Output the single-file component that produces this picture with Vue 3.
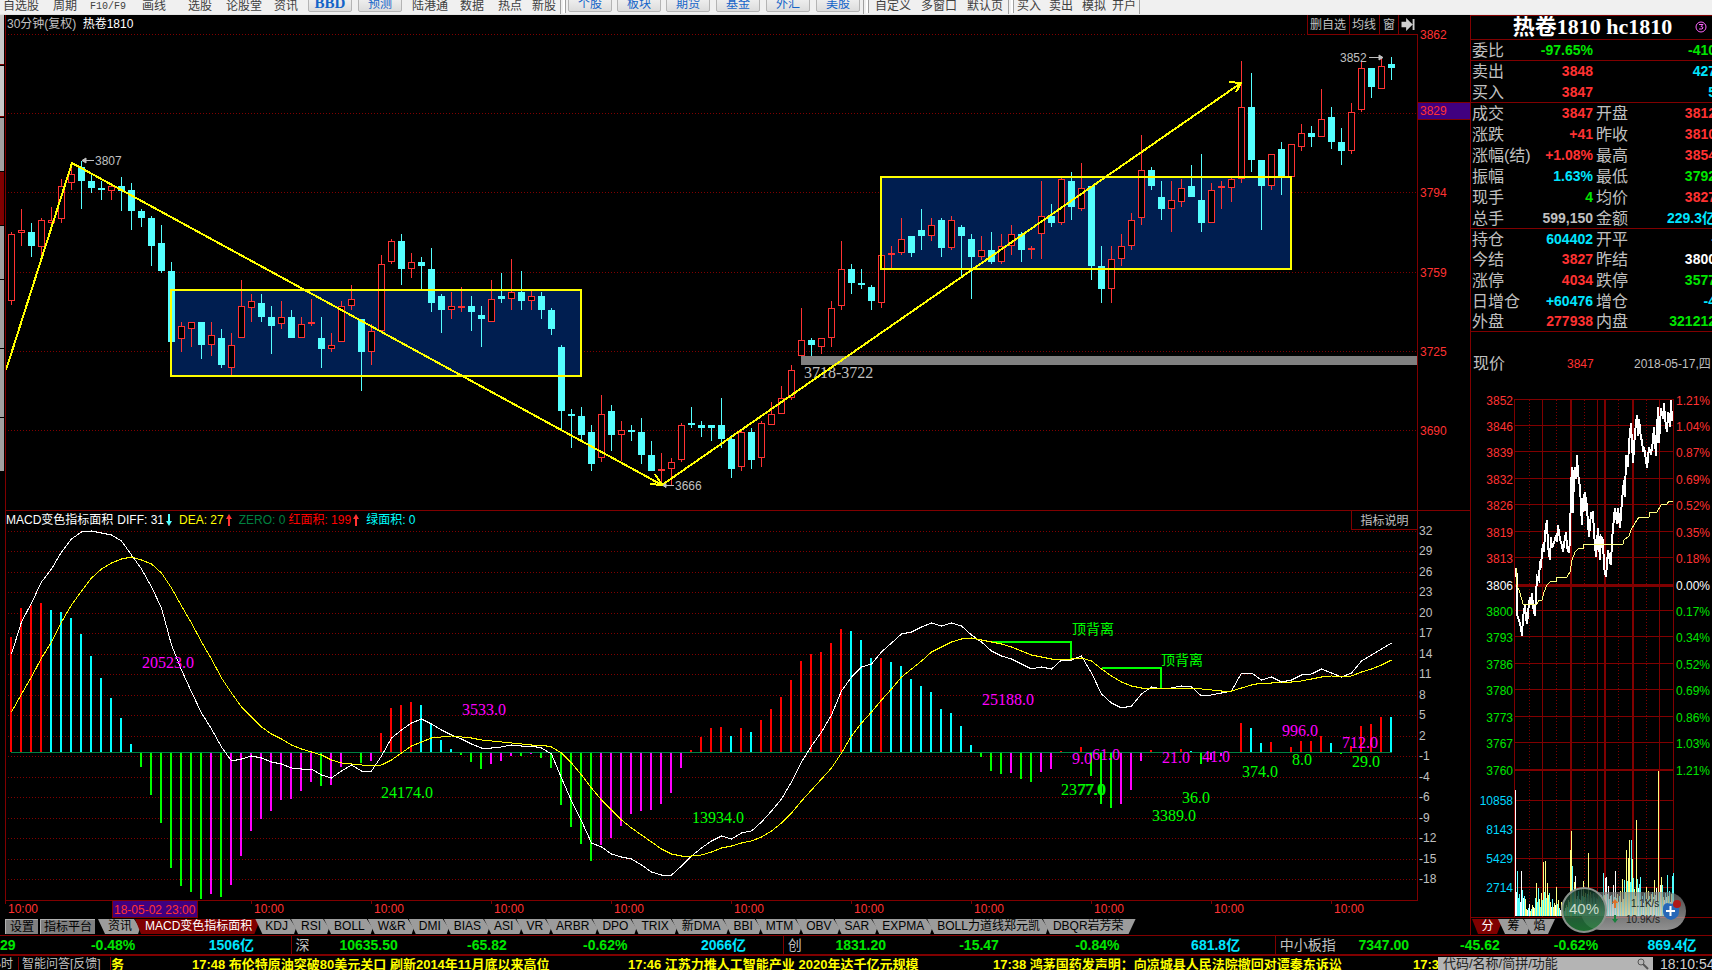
<script setup>
const toolbar = [
  { t: '自选股', w: 50 }, { t: '周期', w: 37 }, { t: 'F10/F9', w: 52, mono: true }, { t: '画线', w: 46 },
  { t: '选股', w: 38 }, { t: '论股堂', w: 48 }, { t: '资讯', w: 35 },
  { t: 'BBD', w: 50, btn: true, bold: true }, { t: '预测', w: 53, btn: true },
  { t: '陆港通', w: 48 }, { t: '数据', w: 38 }, { t: '热点', w: 34 }, { t: '新股', w: 28 }, { sep: true, w: 9 },
  { t: '个股', w: 49, btn: true }, { t: '板块', w: 49, btn: true }, { t: '期货', w: 50, btn: true },
  { t: '基金', w: 50, btn: true }, { t: '外汇', w: 50, btn: true }, { t: '美股', w: 46, btn: true }, { sep: true, w: 12 },
  { t: '自定义', w: 46 }, { t: '多窗口', w: 46 }, { t: '默认页', w: 41 }, { sep: true, w: 9 },
  { t: '买入', w: 32 }, { t: '卖出', w: 33 }, { t: '模拟', w: 30 }, { t: '开户', w: 27 }
]

const rail = [
  { k: 'light', h: 49 }, { k: 'red', h: 1 }, { k: 'gap', h: 1 }, { k: 'light', h: 50 }, { k: 'red', h: 1 }, { k: 'gap', h: 1 },
  { k: 'grey', h: 53 }, { k: 'gap', h: 1 }, { k: 'red', h: 53 }, { k: 'gap', h: 1 }, { k: 'grey', h: 53 }, { k: 'gap', h: 1 },
  { k: 'grey', h: 68 }, { k: 'gap', h: 1 }, { k: 'grey', h: 68 }, { k: 'gap', h: 1 }, { k: 'grey', h: 53 }
]

// direction, high, body top, body bottom, low
const candleText = `
r 232 234 300 305|r 209 230 232 246|c 223 232 246 257|r 218 220 246 256|r 207 220 222 225|r 179 186 218 223
r 168 174 182 190|c 161 167 181 209|c 173 181 188 193|c 181 188 190 200|r 185 186 190 200|c 177 186 191 211
c 183 190 211 230|c 209 211 218 227|c 216 218 246 266|c 225 243 271 273|c 262 271 342 342|r 322 326 338 352
r 322 322 328 347|c 322 322 345 359|r 322 335 344 356|c 329 338 365 368|r 333 345 367 375|r 280 306 337 338
r 294 301 307 322|c 294 303 317 322|c 306 317 326 354|r 301 317 323 329|c 310 317 338 338|r 317 324 337 338
r 299 322 323 326|c 317 338 349 368|r 333 345 348 352|r 301 306 341 341|r 285 299 305 310|c 319 319 352 391
r 324 331 351 365|r 255 264 330 330|r 239 241 261 264|c 234 241 269 285|r 253 262 268 278|c 257 262 266 290
c 248 269 303 312|c 294 296 310 333|r 292 306 309 319|r 287 306 307 312|c 296 306 312 331|c 306 315 319 347
r 280 299 321 321|c 273 296 299 303|r 259 292 298 310|c 271 292 301 310|r 291 296 300 310|c 292 296 310 319
c 308 310 329 335|c 345 347 411 430|c 409 414 416 448|c 407 416 435 440|c 425 432 464 471|r 395 414 457 462
c 405 411 435 451|r 421 430 434 461|c 425 430 432 441|c 418 432 455 464|c 441 455 471 471|r 453 469 470 485
r 458 462 468 485|r 423 425 459 462|c 407 423 425 428|c 421 425 428 437|c 425 425 428 441|c 398 425 439 448
c 435 439 469 478|r 430 432 466 471|c 428 432 460 469|r 421 423 457 467|r 402 414 424 424|r 386 398 413 413
r 365 370 397 400|r 308 340 355 355|c 338 340 345 356|r 338 338 346 354|r 301 308 337 347|r 241 269 305 310
c 264 269 283 294|c 269 283 285 289|c 285 287 301 310|r 255 255 302 308|r 246 253 254 269|r 218 239 252 255
c 236 236 253 257|c 209 230 236 250|r 218 225 235 241|c 218 220 248 257|r 216 220 247 250|c 225 227 236 277
c 234 239 257 299|r 236 250 256 260|c 232 250 262 264|r 234 246 261 264|r 225 234 245 255|c 232 234 250 262
r 246 248 249 259|r 181 216 233 259|c 204 216 223 227|r 177 179 222 225|c 172 181 207 220|r 163 188 208 211
c 186 186 266 280|c 246 266 289 303|r 246 259 288 303|r 234 246 258 266|r 213 220 245 250|r 135 170 217 225
c 167 170 186 190|c 181 197 209 220|r 181 200 208 232|r 179 188 201 207|c 165 186 197 197|c 154 200 223 232
r 183 190 222 222|r 181 186 187 209|r 177 179 187 202|r 61 107 178 183|c 73 107 160 172|c 160 160 186 230
r 154 154 185 190|c 142 149 177 195|r 144 144 176 176|r 124 133 146 151|c 126 133 137 147|r 89 119 136 136
c 107 117 142 149|c 128 142 151 165|r 103 112 150 154|r 61 68 109 112|c 68 68 87 98|r 58 66 88 88|c 57 64 68 80`
const candles = candleText.trim().split(/[|\n]/).map((row, i) => {
  const [kind, ...n] = row.trim().split(' ')
  const [high, top, bottom, low] = n.map(Number)
  return { x: 11 + 10 * i, kind, high, top, bottom, low }
})

// bar colour and the y its free end reaches
const barText = `
r637 r608 r605 r603 c610 c612 c618 c634 c656 c678 c698 c718 c744 g767 g795 g823 g868 g886 g892 g899 m894 g897 m885 m856
m831 m819 m811 m800 m799 m791 m782 g786 m785 m767 m753 g763 m761 r733 r708 r705 r702 c705 c724 c740 c749 g755 g762 g769
m764 m761 m756 g756 m754 g758 g768 g805 g827 g844 g861 m845 m838 m826 m814 m811 m810 m804 m793 m768 r750 r737 r728 r727
c736 r728 c732 r720 r709 r697 r680 r661 r654 r652 r643 r629 c631 c640 c658 r658 c662 c666 c679 c686 c692 c709 c713 c726
c745 g757 g771 g774 m773 g779 g782 m772 m769 r751 r752 r747 g776 g804 g808 m804 m790 m761 r750 r752 r752 r749 c751 g764
m760 m756 r752 r723 c728 c743 r742 r752 r747 r741 r741 r736 c743 g754 r746 r726 r724 r717 c717`
const bars = barText.trim().split(/\s+/).map((s, i) => {
  const y = Number(s.slice(1))
  return { x: 10 + 10 * i, kind: s[0], y: Math.min(y, 752), h: Math.abs(y - 752) }
})

const series = (text) => text.trim().split(/\s+/).map((v, i) => `${11.5 + 10 * i},${v}`).join(' ')
const diff = series(`654 622 603 582 569 552 539 532 531 533 535 541 555 569 587 608 645 670 692 713 729 747 761 759 756 758
  762 764 768 769 769 775 778 771 765 771 771 756 738 730 723 719 724 730 735 739 744 748 748 747 745 746 746 748 754 778
  801 821 843 847 854 857 859 865 872 875 875 866 856 848 841 836 839 833 831 822 811 799 782 762 746 732 715 691 677 667
  664 652 643 634 632 627 623 626 623 626 635 642 651 656 659 664 669 667 669 660 660 656 673 694 703 708 706 694 687 689
  688 686 687 696 695 693 691 673 673 680 677 682 680 675 674 669 673 677 673 661 655 649 643`)
const dea = series(`712 694 677 658 642 622 605 591 578 569 563 559 557 560 564 573 588 606 623 642 659 678 693 707 717 727
  734 739 745 749 752 755 760 763 764 765 766 765 760 753 746 742 738 737 736 737 738 740 741 742 743 744 745 745 747 753
  763 775 788 800 810 820 828 835 842 849 854 856 856 855 852 848 846 843 841 837 831 823 813 801 790 779 768 753 736 723
  712 700 689 677 669 661 652 647 642 639 638 640 642 644 647 651 655 657 659 659 659 658 661 669 676 682 686 688 688 688
  688 688 688 689 690 691 691 688 685 683 683 682 682 681 679 677 676 677 676 672 669 665 660`)

const priceAxis = [[3862, 34], [3829, 113, 110], [3794, 192], [3759, 272], [3725, 351], [3690, 430]]
const macdAxis = [[32, 531], [29, 551], [26, 572], [23, 592], [20, 613], [17, 633], [14, 654], [11, 674], [8, 695], [5, 715],
  [2, 736], [-1, 756], [-4, 777], [-6, 797], [-9, 818], [-12, 838], [-15, 859], [-18, 879]]
const times = [8, 254, 374, 494, 614, 734, 854, 974, 1094, 1214, 1334]

const areaLabels = [
  ['m', '20523.0', 142, 663], ['m', '3533.0', 462, 710], ['g', '24174.0', 381, 793], ['g', '13934.0', 692, 818],
  ['m', '25188.0', 982, 700], ['m', '9.0', 1072, 759], ['m', '61.0', 1092, 755], ['g', '2377.0', 1061, 790],
  ['g', '77.0', 1078, 790], ['m', '21.0', 1162, 758], ['m', '41.0', 1202, 757], ['m', '996.0', 1282, 731],
  ['m', '712.0', 1342, 743], ['g', '374.0', 1242, 772], ['g', '8.0', 1292, 760], ['g', '29.0', 1352, 762],
  ['g', '36.0', 1182, 798], ['g', '3389.0', 1152, 816]
]

const quotes = [
  ['委比', '-97.65%', 'g', '', '-410', 'g', 'line'],
  ['卖出', '3848', 'r', '', '427', 'c', ''],
  ['买入', '3847', 'r', '', '5', 'c', 'line'],
  ['成交', '3847', 'r', '开盘', '3812', 'r', ''],
  ['涨跌', '+41', 'r', '昨收', '3810', 'r', ''],
  ['涨幅(结)', '+1.08%', 'r', '最高', '3854', 'r', ''],
  ['振幅', '1.63%', 'c', '最低', '3792', 'g', ''],
  ['现手', '4', 'g', '均价', '3827', 'r', ''],
  ['总手', '599,150', 's', '金额', '229.3亿', 'c', 'line'],
  ['持仓', '604402', 'c', '开平', '-', 'c', 'short'],
  ['今结', '3827', 'r', '昨结', '3800', 'w', ''],
  ['涨停', '4034', 'r', '跌停', '3577', 'g', ''],
  ['日增仓', '+60476', 'c', '增仓', '-4', 'c', ''],
  ['外盘', '277938', 'r', '内盘', '321212', 'g', 'line short']
]

const miniRows = [[3852, '1.21%', 400], [3846, '1.04%', 426], [3839, '0.87%', 452], [3832, '0.69%', 479], [3826, '0.52%', 505],
  [3819, '0.35%', 532], [3813, '0.18%', 558], [3806, '0.00%', 585], [3800, '0.17%', 611], [3793, '0.34%', 637], [3786, '0.52%', 664],
  [3780, '0.69%', 690], [3773, '0.86%', 717], [3767, '1.03%', 743], [3760, '1.21%', 770]]
const volRows = [[10858, 800], [8143, 829], [5429, 858], [2714, 887]]
const rowTone = (i) => (i < 7 ? 'r' : i === 7 ? 'w' : 'g')
const miniCols = [[1514, 1], [1542, 1], [1570, 2], [1597, 1], [1604, 2], [1632, 2], [1659, 1], [1673, 1]]
const miniDots = [1529, 1556, 1584, 1618, 1646]
const miniPrice = `1516,568 1516,577 1517,573 1517,615 1519,620 1521,628 1522,636 1523,617 1525,605 1526,618 1527,624 1529,603
1530,597 1531,605 1532,593 1533,607 1535,616 1536,595 1537,577 1539,580 1540,561 1541,568 1542,550 1544,542 1544,552 1545,533
1547,520 1548,547 1550,560 1551,537 1552,548 1554,543 1556,535 1557,542 1558,525 1560,540 1562,545 1563,552 1565,538 1566,532
1567,547 1569,553 1570,540 1571,487 1572,467 1573,513 1574,473 1575,467 1576,479 1577,455 1578,473 1580,487 1581,507 1582,525
1583,500 1585,492 1585,511 1586,497 1588,522 1589,537 1591,513 1593,512 1594,533 1596,557 1598,528 1600,560 1601,537 1603,540
1604,567 1606,577 1608,550 1610,562 1611,565 1612,540 1614,517 1615,508 1617,524 1618,508 1620,528 1622,500 1624,480 1625,497
1626,455 1628,467 1629,443 1631,423 1633,463 1635,433 1637,415 1638,436 1639,419 1641,439 1642,440 1643,452 1644,447 1646,460
1647,468 1649,447 1651,455 1653,440 1654,427 1656,456 1658,407 1659,443 1661,408 1663,419 1664,403 1665,418 1667,432 1668,412
1670,427 1671,400 1672,420 1673,420`
const miniAverage = `1516,568 1517,585 1520,593 1523,604 1537,604 1539,600 1542,600 1544,592 1547,585 1551,581 1556,581 1556,577
1567,577 1570,572 1572,560 1575,552 1579,548 1583,548 1583,544 1623,544 1624,540 1629,536 1631,530 1635,523 1639,517 1649,517
1650,512 1657,512 1661,505 1667,504 1669,501 1673,501`
const volText = `
w126 w24 c45 c18 c22 w14 w45 c26 w18 c20 y17 y7 w6 c8 w12 y5 c7 y11 w9 y8 c18 y33 c14 c28 y17 c9 y23 c16 y54 c24 y55 c18 y33
y21 c23 y14 w9 c17 y9 y13 w11 y29 c12 y16 c8 w6 y14 c7 y13 c5 w8 y11 c9 y16 c14 y66 y85 c50 c24 y34 w40 c17 w20 c25 w17 y16
w27 c20 y35 c19 y23 w12 c22 y63 c14 y24 c18 y12 c23 c19 y12 c18 w17 y22 c20 y18 c21 y14 c43 y21 w38 w39 c22 w30 c17 w20 c21
w12 w31 c19 w45 c18 y22 w14 c20 y25 c14 y37 y17 c36 y24 y66 c35 y58 y76 c34 c76 y57 c38 y27 y20 y96 c37 w28 c32 c39 y17 c20
w13 c23 y15 y29 c17 y25 c20 w14 y22 c24 w19 y36 c21 w28 c15 y145 c24 w31 y39 c31 y19 w16 c23 w19 c41 y20 c25 w14 y22 c40 c43`
const vols = volText.trim().split(/\s+/).map((s, i) => ({ x: 1515 + i, kind: s[0], h: Number(s.slice(1)) })).filter((v) => v.x < 1674)

const tabs = ['KDJ', 'RSI', 'BOLL', 'W&R', 'DMI', 'BIAS', 'ASI', 'VR', 'ARBR', 'DPO', 'TRIX', '新DMA', 'BBI', 'MTM', 'OBV', 'SAR',
  'EXPMA', 'BOLL力道线郑元凯', 'DBQR岩芳荣']

const indices = [
  { name: '深', cells: ['10635.50', '-65.82', '-0.62%'], amount: '2066亿' },
  { name: '创', cells: ['1831.20', '-15.47', '-0.84%'], amount: '681.8亿' },
  { name: '中小板指', cells: ['7347.00', '-45.62', '-0.62%'], amount: '869.4亿', last: true }
]
</script>

<template>
  <div class="app">
    <nav class="toolbar">
      <template v-for="(b, i) in toolbar" :key="i">
        <span v-if="b.sep" class="tool-sep" :style="{ width: b.w + 'px' }"></span>
        <span v-else class="tool-slot" :style="{ width: b.w + 'px' }">
          <button type="button" :class="{ raised: b.btn, mono: b.mono, bbd: b.bold }">{{ b.t }}</button>
        </span>
      </template>
      <span class="tool-end"></span>
    </nav>

    <main class="desk">
      <aside class="rail">
        <i v-for="(s, i) in rail" :key="i" :class="s.k" :style="{ height: s.h + 'px' }"></i>
      </aside>

      <section class="charts">
        <div class="panel">
          <svg viewBox="5 15 1465 495">
            <g class="crisp">
              <line v-for="a in priceAxis" :key="a[0]" class="grid" x1="8" x2="1417" :y1="a[1] + 0.5" :y2="a[1] + 0.5" />
              <rect class="zone" x="171" y="290" width="410" height="86" />
              <rect class="zone" x="881" y="177" width="410" height="92" />
              <g v-for="c in candles" :key="c.x" :class="'k-' + c.kind">
                <template v-if="c.kind === 'r'">
                  <rect class="wick" :x="c.x" :y="c.high" width="1" :height="c.low - c.high" />
                  <rect class="body" :x="c.x - 2.5" :y="c.top + 0.5" width="6" :height="Math.max(c.bottom - c.top, 1)" />
                </template>
                <template v-else>
                  <rect class="wick" :x="c.x" :y="c.high" width="1" :height="c.low - c.high" />
                  <rect class="wick" :x="c.x - 3" :y="c.top" width="7" :height="Math.max(c.bottom - c.top, 1)" />
                </template>
              </g>
              <rect x="801" y="356" width="616" height="9" fill="#808080" />
              <rect class="frame" x="171" y="290" width="410" height="86" />
              <rect class="frame" x="881" y="177" width="410" height="92" />
            </g>
            <text class="song grey" x="804" y="378">3718-3722</text>
            <g class="crisp">
              <polyline class="trend" points="6,370 72,163 662,485 1241,83" />
              <polyline class="trend" points="650,484 662,485 655,474" />
              <polyline class="trend" points="1229,82 1241,83 1236,92" />
            </g>
            <g class="mark">
              <path d="M83 160.5H94M82 160.5l4-2.5v5zM1369 57.5H1381M1383 57.5l-4-2.5v5zM665 485.5H674M663 485.5l3-2v4z" />
            </g>
            <text class="grey" x="95" y="165">3807</text>
            <text class="grey" x="1340" y="62">3852</text>
            <text class="grey" x="675" y="490">3666</text>
            <g class="crisp">
              <rect class="rule" x="5" y="15" width="1" height="495" />
              <rect class="rule" x="1417" y="15" width="1" height="495" />
              <rect class="cursor" x="1417.5" y="102.5" width="53" height="17" />
            </g>
            <text v-for="a in priceAxis" :key="a[0]" class="red" x="1420" :y="(a[2] || a[1]) + 5">{{ a[0] }}</text>
          </svg>
          <h1 class="chart-title"><span>30分钟(复权)</span> 热卷1810</h1>
          <div class="chart-tools">
            <button type="button">删自选</button>
            <button type="button">均线</button>
            <button type="button">窗</button>
            <button type="button" aria-label="最新">
              <svg class="skip" viewBox="0 0 14 14"><path d="M0 4h5V0l7 7-7 7v-4H0zM12 1h2v12h-2z" /></svg>
            </button>
          </div>
        </div>

        <div class="panel">
          <svg viewBox="5 510 1465 408">
            <g class="crisp">
              <rect class="rule" x="5" y="510" width="1465" height="1" />
              <line v-for="a in macdAxis" :key="a[0]" class="grid" x1="8" x2="1417" :y1="a[1] + 0.5" :y2="a[1] + 0.5" />
              <rect v-for="b in bars" :key="b.x" :class="'b-' + b.kind" :x="b.x" :y="b.y" width="2" :height="b.h" />
              <rect x="11" y="752" width="1381" height="1" fill="#008040" />
              <polyline class="curve" stroke="#fff" :points="diff" />
              <path class="signal" d="M992 642H1071V659M1102 668H1161V688" />
              <polyline class="curve" stroke="#ff0" :points="dea" />
              <rect class="rule" x="5" y="510" width="1" height="391" />
              <rect class="rule" x="1417" y="510" width="1" height="391" />
              <rect class="rule" x="5" y="900" width="1413" height="1" />
              <rect v-for="t in times" :key="t" class="rule" :x="t - 3" y="901" width="1" height="3" />
              <rect class="cursor" x="112.5" y="900.5" width="85" height="17" />
            </g>
            <text v-for="(l, i) in areaLabels" :key="i" class="song" :class="'t-' + l[0]" :x="l[2]" :y="l[3] + 5">{{ l[1] }}</text>
            <text class="warn" x="1072" y="634">顶背离</text>
            <text class="warn" x="1161" y="665">顶背离</text>
            <text v-for="a in macdAxis" :key="a[0]" class="grey" x="1419" :y="a[1] + 4">{{ a[0] }}</text>
            <text v-for="t in times" :key="t" class="red" :x="t" y="913">10:00</text>
            <text class="red" x="114" y="914">18-05-02 23:00</text>
          </svg>
          <p class="macd-title">
            <span class="w">MACD变色指标面积</span>
            <span class="w">DIFF: 31<svg class="arrow" viewBox="0 0 6 12"><path fill="#54ffff" d="M2 0h2v7h2l-3 5-3-5h2z" /></svg></span>
            <span class="y">DEA: 27<svg class="arrow" viewBox="0 0 6 12"><path fill="#ff3232" d="M2 12h2V5h2L3 0 0 5h2z" /></svg></span>
            <span class="z">ZERO: 0</span>
            <span class="rr">红面积: 199<svg class="arrow" viewBox="0 0 6 12"><path fill="#ff3232" d="M2 12h2V5h2L3 0 0 5h2z" /></svg></span>
            <span class="cc">绿面积: 0</span>
          </p>
          <button type="button" class="explain">指标说明</button>
        </div>

        <nav class="tabs">
          <button type="button" class="flat">设置</button>
          <button type="button" class="flat wide">指标平台</button>
          <button type="button" class="tab news">资讯</button>
          <button type="button" class="tab active">MACD变色指标面积</button>
          <button v-for="t in tabs" :key="t" type="button" class="tab">{{ t }}</button>
        </nav>
      </section>

      <aside class="quote">
        <h2>热卷1810 hc1810
          <svg class="badge" viewBox="0 0 12 12"><circle cx="6" cy="6" r="5" fill="none" stroke="#f6f" /><path d="M4 3.5h4L6 5.5q2 0 2 1.5T4 8" fill="none" stroke="#f6f" /></svg>
        </h2>
        <table>
          <colgroup><col class="c1" /><col class="c2" /><col class="c3" /><col class="c4" /></colgroup>
          <tbody>
            <tr v-for="q in quotes" :key="q[0]" :class="q[6]">
              <th scope="row">{{ q[0] }}</th>
              <td :class="'q-' + q[2]">{{ q[1] }}</td>
              <th>{{ q[3] }}</th>
              <td :class="'q-' + q[5]">{{ q[4] }}</td>
            </tr>
          </tbody>
        </table>
        <div class="panel">
          <svg viewBox="1471 332 241 586">
            <text class="name" x="1473" y="369">现价</text>
            <text class="red" x="1567" y="368">3847</text>
            <text class="grey" x="1634" y="368">2018-05-17,四</text>
            <g class="crisp">
              <rect v-for="(m, i) in miniRows" :key="m[0]" class="rule" x="1514" :y="i === 7 ? 584 : m[2] - 1" width="160" :height="i === 7 ? 3 : i === 14 ? 2 : 1" />
              <rect v-for="v in volRows" :key="v[0]" class="rule" x="1514" :y="v[1]" width="160" height="1" />
              <rect v-for="c in miniCols" :key="c[0]" class="rule" :x="c[0]" y="400" :width="c[1]" height="517" />
              <line v-for="d in miniDots" :key="d" class="grid" :x1="d + 0.5" :x2="d + 0.5" y1="400" y2="917" />
              <rect v-for="v in vols" :key="v.x" :class="'v-' + v.kind" :x="v.x" :y="916 - v.h" width="1" :height="v.h" />
              <polyline class="curve bold" stroke="#fff" :points="miniPrice" />
              <polyline class="curve" stroke="#ffff80" :points="miniAverage" />
              <rect class="rule" x="1471" y="917" width="241" height="1" />
            </g>
            <g v-for="(m, i) in miniRows" :key="m[0]" :class="'m-' + rowTone(i)">
              <text text-anchor="end" x="1513" :y="m[2] + 5">{{ m[0] }}</text>
              <text x="1676" :y="m[2] + 5">{{ m[1] }}</text>
            </g>
            <text v-for="v in volRows" :key="v[0]" class="m-c" text-anchor="end" x="1513" :y="v[1] + 5">{{ v[0] }}</text>
          </svg>
          <div class="meter">
            <svg viewBox="0 0 126 48">
              <defs>
                <linearGradient id="pill" x1="0" x2="0" y1="0" y2="1"><stop offset="0" stop-color="#777" /><stop offset="1" stop-color="#ddd" /></linearGradient>
                <linearGradient id="ball" x1="0" x2="0" y1="0" y2="1"><stop offset="0" stop-color="#0c2c20" /><stop offset="0.55" stop-color="#2a6444" /><stop offset="1" stop-color="#218036" /></linearGradient>
              </defs>
              <rect x="20" y="6" width="105" height="38" rx="19" fill="url(#pill)" fill-opacity="0.65" />
              <circle cx="23" cy="24" r="22" fill="url(#ball)" fill-opacity="0.85" stroke="#8a928c" stroke-width="2" />
              <text x="23" y="28" text-anchor="middle" class="pct">40%</text>
              <text x="70" y="21" class="rate">1.1K/s</text>
              <text x="65" y="37" class="rate">10.9K/s</text>
              <path d="M53 22v-5h-2l3-4 3 4h-2v5z" fill="#e07028" />
              <path d="M53 29v4h-2l3 4 3-4h-2v-4z" fill="#18803c" />
              <path d="M118 16v10q0 6-8 8-8-2-8-8v-4q0-4 4-5 6 2 12-1z" fill="#2868b8" />
              <path d="M105 25h9M109.5 20v10" stroke="#fff" stroke-width="2" />
              <circle cx="116" cy="18" r="4" fill="#b01818" />
            </svg>
          </div>
        </div>
        <nav class="tabs side">
          <button type="button" class="tab active">分</button>
          <button type="button" class="tab">筹</button>
          <button type="button" class="tab">焰</button>
        </nav>
      </aside>
    </main>

    <section class="indices">
      <div class="index first">
        <b class="edge">29</b><b>-0.48%</b><b class="amt">1506亿</b>
      </div>
      <div v-for="x in indices" :key="x.name" class="index" :class="{ last: x.last }">
        <span>{{ x.name }}</span>
        <b v-for="c in x.cells" :key="c">{{ c }}</b>
        <b class="amt">{{ x.amount }}</b>
      </div>
    </section>

    <footer class="ticker">
      <span class="cell clip">小时</span>
      <a href="#" class="cell ask">智能问答[反馈]</a>
      <div class="news-line">
        <span class="n0">务</span>
        <span class="n1">17:48 布伦特原油突破80美元关口 刷新2014年11月底以来高位</span>
        <span class="n2">17:46 江苏力推人工智能产业 2020年达千亿元规模</span>
        <span class="n3">17:38 鸿茅国药发声明：向凉城县人民法院撤回对谭秦东诉讼</span>
        <span>17:3</span>
      </div>
      <label class="search">
        <input type="text" aria-label="搜索" placeholder="代码/名称/简拼/功能" />
        <svg viewBox="0 0 12 12"><circle cx="4" cy="4" r="3" fill="none" stroke="#555" /><path d="M6 6l5 5" stroke="#555" stroke-width="2" /></svg>
      </label>
      <time>18:10:54</time>
    </footer>
  </div>
</template>

<style>
html, body { background: #000; }
body { margin: 0; overflow: hidden; }
</style>

<style scoped>
.app { font: 12px/16px "Liberation Sans", "Noto Sans CJK SC", sans-serif; color: #c0c0c0; background: #000; overflow: hidden; min-height: 100vh; }
button { font: inherit; color: inherit; background: none; border: 0; padding: 0; margin: 0; white-space: nowrap; }
svg { display: block; }

.toolbar { display: flex; height: 14px; padding-left: 3px; background: #f0f0f0; border-bottom: 1px solid #e4e4e4; color: #404040; overflow: hidden; }
.tool-slot { flex: none; height: 14px; }
.tool-slot button { display: block; line-height: 13px; }
.tool-slot .mono { font-family: "Liberation Mono", monospace; font-size: 10px; }
.tool-slot .raised { width: 44px; height: 20px; margin-top: -8px; margin-left: -1px; line-height: 22px; color: #1464c8; background: linear-gradient(#f8f8f8, #dcdcdc); border: 1px solid #b4b4b4; border-radius: 2px; box-sizing: border-box; }
.tool-slot .bbd { font: bold 15px/21px "Liberation Serif", serif; }
.tool-sep { flex: none; box-sizing: border-box; height: 14px; border-left: 1px solid #a0a0a0; }
.tool-sep::after { content: ""; display: block; margin-left: 2px; width: 2px; height: 13px; background: #fff; border-right: 1px solid #a0a0a0; }
.tool-end { border-left: 1px solid #a0a0a0; }

.desk { display: grid; grid-template-columns: 5px minmax(0, 1fr) 242px; }
.rail { display: flex; flex-direction: column; }
.rail i { display: block; width: 4px; }
.rail .light { background: #c8c8c8; }
.rail .grey { background: #a0a0a0; }
.rail .red { background: #800000; }

.panel { position: relative; }
.panel > svg { width: 100%; height: auto; }
.crisp { shape-rendering: crispEdges; }
.grid { stroke: #800000; stroke-dasharray: 1 2; }
.rule { fill: #800000; }
.zone { fill: #001e50; }
.frame { fill: none; stroke: #ff0; stroke-width: 2; }
.trend { fill: none; stroke: #ff0; stroke-width: 2; }
.k-r .wick { fill: #ff3232; }
.k-r .body { fill: #000; stroke: #ff3232; }
.k-c .wick { fill: #54ffff; }
.mark path { stroke: #c0c0c0; fill: #c0c0c0; stroke-width: 1; }
.cursor { fill: #400080; stroke: #800000; }
.grey { fill: #c0c0c0; }
.red { fill: #ff3232; }
.song { font-family: "Liberation Serif", serif; font-size: 16px; }
.b-r { fill: #f00; }
.b-c { fill: #0ff; }
.b-g { fill: #0f0; }
.b-m { fill: #f0f; }
.t-g { fill: #0f0; }
.t-m { fill: #f0f; }
.curve { fill: none; stroke-width: 1; }
.curve.bold { stroke-width: 2; }
.signal { fill: none; stroke: #0f0; stroke-width: 2; }
.warn { fill: #0f0; font-size: 14px; }

.chart-title { position: absolute; left: 2px; top: 1px; margin: 0; font-size: 12px; line-height: 16px; font-weight: 400; color: #fff; }
.chart-title span { color: #c0c0c0; margin-right: 3px; }
.chart-tools { position: absolute; top: 0; right: 52px; display: flex; height: 19px; border-bottom: 1px solid #800000; background: #000; }
.chart-tools button { border-left: 1px solid #800000; padding: 0 3px 0 2px; line-height: 18px; box-sizing: border-box; }
.chart-tools button:nth-child(3) { padding: 0 3px; }
.chart-tools button:last-child { padding: 0 3px 0 2px; }
.skip { width: 14px; height: 13px; fill: #d0d0d0; }
.macd-title { position: absolute; left: 1px; top: 2px; margin: 0; display: flex; gap: 4px; line-height: 17px; white-space: nowrap; }
.macd-title span { display: flex; align-items: center; }
.macd-title .y { margin-left: 3px; }
.macd-title .z { margin-left: 3px; }
.arrow { width: 6px; height: 12px; margin: 0 0 1px 2px; }
.w { color: #fff; }
.y { color: #ff0; }
.z { color: #008040; }
.rr { color: #f00; margin-left: -1px; }
.cc { color: #0ff; margin-left: 3px; }
.explain { position: absolute; top: 1px; right: 52px; width: 67px; height: 19px; border: 1px solid #800000; border-top: 0; background: #000; line-height: 20px; }

.tabs { display: flex; height: 17px; box-sizing: border-box; padding: 1px 0 0 0; color: #000; line-height: 15px; }
.flat { background: #808080; border: 1px solid #b0b0b0; border-width: 1px 0 0 1px; width: 33px; height: 15px; line-height: 14px; margin-right: 2px; }
.wide { width: 55px; }
.tab { height: 15px; line-height: 15px; background: #9c9c9c; padding: 0 8px 0 10px; margin-left: -5px; clip-path: polygon(0 0, calc(100% - 6px) 0, 100% 60%, calc(100% - 2px) 100%, 7px 100%); }
.news { margin-left: 1px; }
.active { background: #800000; color: #fff; clip-path: polygon(0 0, 100% 0, calc(100% - 6px) 100%, 6px 100%); }
.tab:last-child { padding-right: 12px; clip-path: polygon(0 0, 100% 0, calc(100% - 7px) 100%, 7px 100%); }
.side { padding-left: 6px; }
.side .tab { width: 31px; padding: 0; margin-left: -5px; }

.quote { border-left: 1px solid #800000; overflow: hidden; }
.quote h2 { position: relative; box-sizing: border-box; height: 25px; margin: 0; padding-left: 2px; border: solid #800000; border-width: 1px 0; font: bold 22px/22px "Liberation Serif", "Noto Sans CJK SC", serif; color: #fff; text-align: center; white-space: nowrap; overflow: hidden; }
.badge { position: absolute; right: 5px; top: 5px; width: 12px; height: 12px; }
table { width: calc(100% + 5px); table-layout: fixed; border-spacing: 0; line-height: 19px; }
.c1 { width: 56px; }
.c2 { width: 66px; }
.c3 { width: 58px; }
th, td { box-sizing: border-box; height: 21px; padding: 0; white-space: nowrap; font-size: 16px; }
th { font-weight: 400; text-align: left; padding-left: 1px; color: #c0c0c0; }
td { text-align: right; font-size: 14px; font-weight: 700; }
td:last-child { padding-right: 1px; }
td + th { padding-left: 3px; }
.short th, .short td { height: 20px; }
.line th, .line td { border-bottom: 1px solid #800000; }
.q-r { color: #ff3232; }
.q-g { color: #00e600; }
.q-c { color: #00e6ff; }
.q-s { color: #c0c0c0; }
.q-w { color: #fff; }
.name { font-size: 16px; fill: #c0c0c0; }
.m-r { fill: #ff3232; }
.m-g { fill: #00e600; }
.m-w { fill: #fff; }
.m-c { fill: #00d8ff; }
.v-w { fill: #fff; }
.v-c { fill: #54ffff; }
.v-y { fill: #ffff80; }
.meter { position: absolute; right: 25px; bottom: -16px; width: 126px; z-index: 1; }
.pct { font-size: 15px; fill: #c8dccc; }
.rate { font-size: 10px; fill: #222; }

.indices { display: flex; height: 18px; border-top: 1px solid #800000; border-bottom: 2px solid #800000; overflow: hidden; font-size: 14px; line-height: 18px; }
.index { flex: 492 1 0; min-width: 0; box-sizing: border-box; display: flex; border-left: 1px solid #800000; white-space: nowrap; }
.index.first { flex: 291 1 0; border: 0; }
.index.last { flex: 445 1 0; margin-right: -8px; }
.index span { padding-left: 4px; }
.index b { flex: 1 1 0; text-align: center; color: #00e600; }
.index .edge { flex: 0 0 54px; text-align: left; }
.index .amt { color: #00e6ff; }

.ticker { display: flex; height: 13px; margin-top: 1px; line-height: 15px; font-size: 12px; overflow: hidden; white-space: nowrap; }
.cell { flex: none; box-sizing: border-box; border-right: 1px solid #800000; color: #c0c0c0; text-decoration: none; overflow: hidden; }
.clip { width: 19px; display: flex; justify-content: flex-end; padding-right: 5px; }
.ask { width: 92px; padding-left: 3px; }
.news-line { flex: 1 1 0; min-width: 0; display: flex; overflow: hidden; color: #ff0; font-weight: 700; font-size: 13px; }
.news-line span { flex: none; }
.n0 { width: 81px; }
.n1 { width: 436px; }
.n2 { width: 365px; }
.n3 { width: 420px; }
.search { flex: none; display: flex; width: 215px; background: #b4b4b4; align-items: center; }
.search input { flex: 1; min-width: 0; border: 0; background: none; padding: 0 5px; font: 13px/15px "Liberation Sans", "Noto Sans CJK SC", sans-serif; outline: 0; height: 15px; }
.search input::placeholder { color: #202020; opacity: 1; }
.search svg { width: 12px; height: 12px; margin-right: 4px; }
time { flex: none; width: 52px; padding-left: 7px; font-size: 14px; color: #d0d0d0; overflow: hidden; }
</style>
